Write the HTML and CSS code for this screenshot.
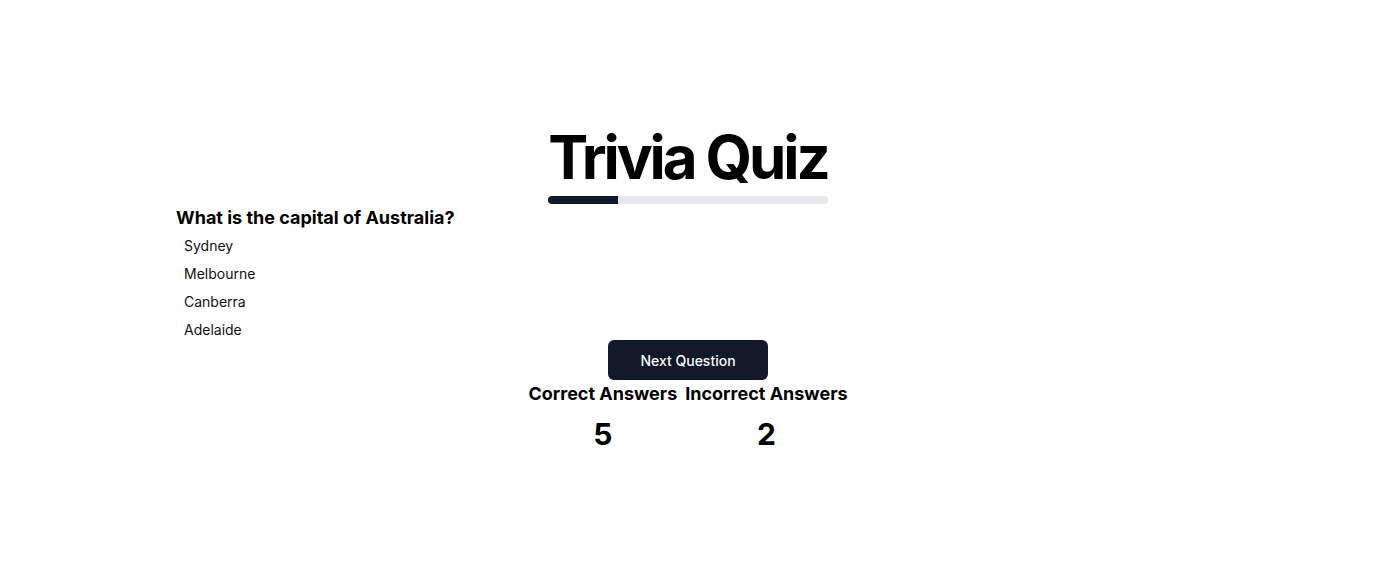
FILE: index.html
```html
<!DOCTYPE html>
<html lang="en">
<head>
<meta charset="utf-8">
<title>Trivia Quiz</title>
<link rel="stylesheet" href="styles.css">
</head>
<body>
<main class="page">
  <header class="header">
    <h1 class="title">Trivia Quiz</h1>
    <div class="progress"><div class="progress-fill" style="width: 25%"></div></div>
  </header>
  <section class="quiz">
    <h2 class="question">What is the capital of Australia?</h2>
    <ul class="options">
      <li class="option">Sydney</li>
      <li class="option">Melbourne</li>
      <li class="option">Canberra</li>
      <li class="option">Adelaide</li>
    </ul>
  </section>
  <button class="next">Next Question</button>
  <section class="stats">
    <div class="stat">
      <h3 class="stat-label">Correct Answers</h3>
      <p class="stat-value">5</p>
    </div>
    <div class="stat">
      <h3 class="stat-label">Incorrect Answers</h3>
      <p class="stat-value">2</p>
    </div>
  </section>
</main>
</body>
</html>
```
FILE: styles.css
```css
* { box-sizing: border-box; }
html, body { margin: 0; padding: 0; background: #ffffff; }
body {
  font-family: Inter, "Noto Sans", sans-serif;
  color: #000;
}
.page {
  display: flex;
  flex-direction: column;
  align-items: center;
  padding-top: 127px;
}
.header {
  display: flex;
  flex-direction: column;
}
.title {
  margin: 0;
  font-size: 60px;
  line-height: 60px;
  font-weight: 700;
  letter-spacing: -0.052em;
}
.progress {
  margin-top: 9px;
  height: 8px;
  border-radius: 9999px;
  background: #e5e7eb;
  overflow: hidden;
}
.progress-fill {
  height: 100%;
  background: #111827;
}
.quiz {
  width: 100%;
  max-width: 1024px;
}
.question {
  margin: 0;
  font-size: 18px;
  line-height: 28px;
  font-weight: 700;
}
.options {
  list-style: none;
  margin: 4px 0 0;
  padding: 0;
  display: flex;
  flex-direction: column;
  gap: 8px;
}
.option {
  padding: 0 8px;
  font-size: 14px;
  line-height: 20px;
  color: #111;
}
.next {
  margin-top: 0;
  width: 160px;
  height: 40px;
  border: none;
  border-radius: 6px;
  background: #111827;
  color: #f9fafb;
  font-family: Inter, sans-serif;
  font-size: 14px;
  font-weight: 500;
}
.stats {
  display: flex;
  gap: 8px;
}
.stat {
  display: flex;
  flex-direction: column;
  align-items: center;
}
.stat-label {
  margin: 0;
  font-size: 18px;
  line-height: 28px;
  font-weight: 700;
}
.stat-value {
  margin: 8px 0 0;
  font-size: 30px;
  line-height: 36px;
  font-weight: 700;
}
```
